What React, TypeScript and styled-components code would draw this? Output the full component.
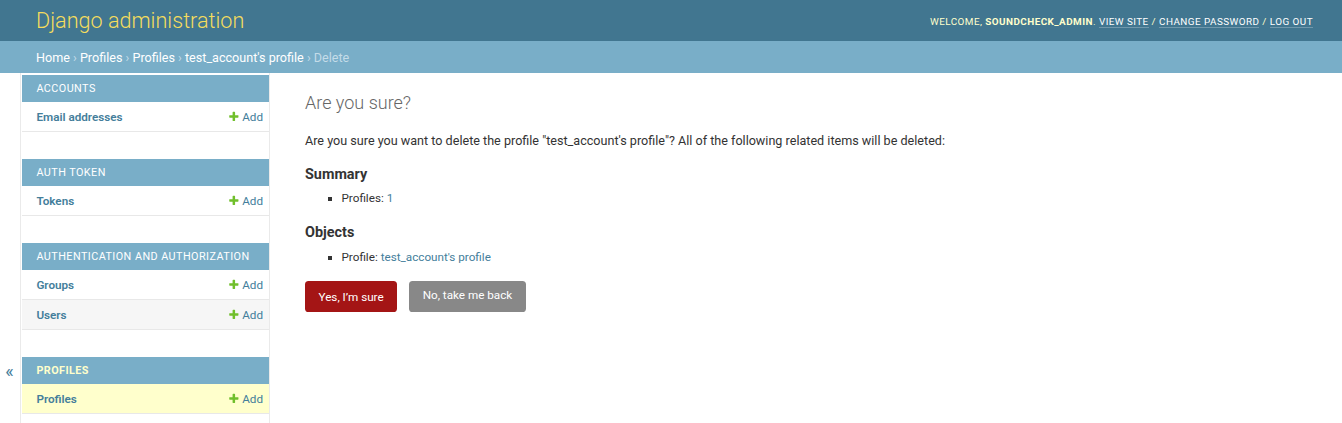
import React from 'react';
import styled, { createGlobalStyle } from 'styled-components';

const GlobalStyle = createGlobalStyle`
  html, body { margin: 0; padding: 0; }
  body {
    font-family: Roboto, "Lucida Grande", "DejaVu Sans", Verdana, Arial, sans-serif;
    font-size: 12.6px;
    color: #333;
    background: #fff;
  }
  a { text-decoration: none; color: #447e9b; }
`;

const Header = styled.header`
  display: flex;
  justify-content: space-between;
  align-items: center;
  box-sizing: border-box;
  height: 41px;
  padding: 0 29px 0 36px;
  background: #417690;
  color: #ffc;
`;

const Branding = styled.h1`
  margin: 0;
  font-size: 21.6px;
  font-weight: 300;
  line-height: 1;
  color: #f5dd5d;
`;

const UserTools = styled.div`
  font-size: 9.9px;
  font-weight: 400;
  letter-spacing: 0.45px;
  text-transform: uppercase;
  padding-top: 1px;
  strong { font-weight: 700; }
`;

const ToolLink = styled.a`
  color: #fff;
  border-bottom: 1px solid rgba(255, 255, 255, 0.25);
`;

const Breadcrumbs = styled.nav`
  display: flex;
  align-items: center;
  box-sizing: border-box;
  height: 32px;
  padding: 0 36px;
  background: #79aec8;
  color: #c4dce8;
  font-size: 12.6px;
  white-space: pre;
  a { color: #fff; }
`;

const Main = styled.div`
  display: flex;
  min-height: 598px;
`;

const ToggleButton = styled.button`
  flex: 0 0 21px;
  box-sizing: border-box;
  display: flex;
  align-items: center;
  justify-content: center;
  padding: 0 1px 4px 0;
  border: 0;
  border-right: 1px solid #eaeaea;
  background: #fff;
  color: #447e9b;
  font-family: Roboto, sans-serif;
  font-size: 18px;
  cursor: pointer;
`;

const NavSidebar = styled.nav`
  flex: 0 0 249px;
  box-sizing: border-box;
  padding: 2px 0 0 1px;
  border-right: 1px solid #eaeaea;
`;

const Module = styled.section`
  margin-bottom: 27px;
`;

const Caption = styled.div<{ $current?: boolean }>`
  display: flex;
  align-items: center;
  height: 27px;
  padding: 0 14.4px;
  background: #79aec8;
  color: ${(p) => (p.$current ? '#ffc' : '#fff')};
  font-size: 10.8px;
  font-weight: ${(p) => (p.$current ? 700 : 400)};
  letter-spacing: 0.45px;
  text-transform: uppercase;
`;

const Row = styled.div<{ $bg: string }>`
  display: flex;
  align-items: center;
  justify-content: space-between;
  box-sizing: border-box;
  height: 30px;
  padding: 0 6px 0 14.4px;
  border-bottom: 1px solid #e8e8e8;
  background: ${(p) => p.$bg};
  font-size: 11.7px;
`;

const ModelLink = styled.a`
  font-weight: 600;
  color: #447e9b;
`;

const AddLink = styled.a`
  display: flex;
  align-items: center;
  gap: 2.7px;
  color: #447e9b;
  svg { display: block; margin-top: 1px; }
`;

const Content = styled.main`
  flex: 1;
  padding: 18px 35px;
`;

const Title = styled.h1`
  margin: 1px 0 18px;
  font-size: 18px;
  font-weight: 300;
  color: #666;
`;

const Lead = styled.p`
  margin: 0 0 10px;
  padding-top: 1px;
  font-size: 12.6px;
  line-height: 140%;
`;

const SectionTitle = styled.h2`
  margin: 15.9px 0 5.7px;
  font-size: 14.4px;
  font-weight: 700;
  color: #333;
`;

const List = styled.ul`
  margin: 0;
  padding: 0 0 0 36.5px;
  li {
    list-style-type: square;
    font-size: 11.7px;
    line-height: 18px;
    padding: 1px 0;
  }
`;

const Actions = styled.form`
  display: flex;
  gap: 12px;
  margin-top: 14px;
`;

const ActionButton = styled.button<{ $variant: 'danger' | 'cancel' }>`
  display: flex;
  align-items: center;
  box-sizing: border-box;
  height: 31px;
  padding: ${(p) => (p.$variant === 'danger' ? '1px 13.5px 0' : '0 13.5px 3px')};
  border: 0;
  border-radius: 3.6px;
  background: ${(p) => (p.$variant === 'danger' ? '#a41515' : '#888')};
  color: #fff;
  font-family: Roboto, sans-serif;
  font-size: 11.7px;
  cursor: pointer;
`;

const PlusIcon = () => (
  <svg width="11.7" height="11.7" viewBox="0 0 1792 1792">
    <path
      fill="#70bf2b"
      d="M1600 736v192q0 40-28 68t-68 28h-416v416q0 40-28 68t-68 28h-192q-40 0-68-28t-28-68v-416h-416q-40 0-68-28t-28-68v-192q0-40 28-68t68-28h416v-416q0-40 28-68t68-28h192q40 0 68 28t28 68v416h416q40 0 68 28t28 68z"
    />
  </svg>
);

type App = { name: string; current?: boolean; models: { name: string; current?: boolean }[] };

const apps: App[] = [
  { name: 'Accounts', models: [{ name: 'Email addresses' }] },
  { name: 'Auth Token', models: [{ name: 'Tokens' }] },
  { name: 'Authentication and Authorization', models: [{ name: 'Groups' }, { name: 'Users' }] },
  { name: 'Profiles', current: true, models: [{ name: 'Profiles', current: true }] },
];

export default function AppPage() {
  return (
    <>
      <GlobalStyle />
      <Header>
        <Branding>Django administration</Branding>
        <UserTools>
          Welcome, <strong>soundcheck_admin</strong>. <ToolLink href="#">View site</ToolLink> /{' '}
          <ToolLink href="#">Change password</ToolLink> / <ToolLink href="#">Log out</ToolLink>
        </UserTools>
      </Header>
      <Breadcrumbs>
        <a href="#">Home</a>{' › '}<a href="#">Profiles</a>{' › '}<a href="#">Profiles</a>{' › '}
        <a href="#">test_account's profile</a>{' › '}Delete
      </Breadcrumbs>
      <Main>
        <ToggleButton aria-label="Toggle navigation">«</ToggleButton>
        <NavSidebar>
          {apps.map((app) => (
            <Module key={app.name}>
              <Caption $current={app.current}>{app.name}</Caption>
              {app.models.map((m, i) => (
                <Row key={m.name} $bg={m.current ? '#ffc' : i % 2 === 1 ? '#f6f6f6' : '#fff'}>
                  <ModelLink href="#">{m.name}</ModelLink>
                  <AddLink href="#">
                    <PlusIcon />
                    Add
                  </AddLink>
                </Row>
              ))}
            </Module>
          ))}
        </NavSidebar>
        <Content>
          <Title>Are you sure?</Title>
          <Lead>
            Are you sure you want to delete the profile "test_account's profile"? All of the following related items
            will be deleted:
          </Lead>
          <SectionTitle>Summary</SectionTitle>
          <List>
            <li>
              Profiles: <a href="#">1</a>
            </li>
          </List>
          <SectionTitle>Objects</SectionTitle>
          <List>
            <li>
              Profile: <a href="#">test_account's profile</a>
            </li>
          </List>
          <Actions onSubmit={(e) => e.preventDefault()}>
            <ActionButton type="submit" $variant="danger">
              Yes, I’m sure
            </ActionButton>
            <ActionButton type="button" $variant="cancel">
              No, take me back
            </ActionButton>
          </Actions>
        </Content>
      </Main>
    </>
  );
}
